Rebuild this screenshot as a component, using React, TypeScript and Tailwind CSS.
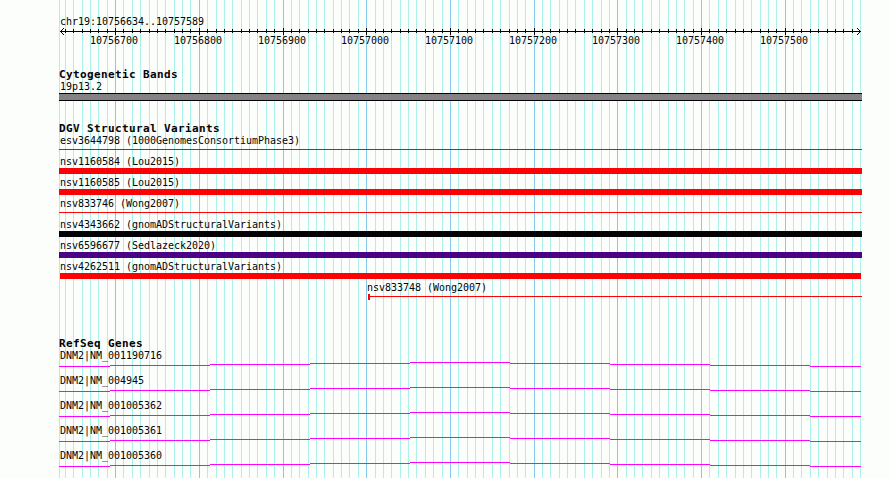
import React from 'react';

const START = 59;
const MAJOR = 83.7;
const MINOR = 8.37;
const FIRST_MAJOR = 115.62;

const rulerLabels = [
  '10756700',
  '10756800',
  '10756900',
  '10757000',
  '10757100',
  '10757200',
  '10757300',
  '10757400',
  '10757500',
];

const ticks = Array.from({ length: 96 }, (_, i) => ({
  x: Math.floor(FIRST_MAJOR + (i - 6) * MINOR),
  major: (i - 6) % 10 === 0,
}));

type Variant = { label: string; kind: 'thin' | 'bar' | 'short' | 'partial'; color: string };

const variants: Variant[] = [
  { label: 'esv3644798 (1000GenomesConsortiumPhase3)', kind: 'thin', color: 'bg-[#fc0204]' },
  { label: 'nsv1160584 (Lou2015)', kind: 'bar', color: 'bg-[#fc0204]' },
  { label: 'nsv1160585 (Lou2015)', kind: 'bar', color: 'bg-[#fc0204]' },
  { label: 'nsv833746 (Wong2007)', kind: 'thin', color: 'bg-[#fc0204]' },
  { label: 'nsv4343662 (gnomADStructuralVariants)', kind: 'bar', color: 'bg-[#040204]' },
  { label: 'nsv6596677 (Sedlazeck2020)', kind: 'bar', color: 'bg-[#4c0284]' },
  { label: 'nsv4262511 (gnomADStructuralVariants)', kind: 'short', color: 'bg-[#fc0204]' },
  { label: 'nsv833748 (Wong2007)', kind: 'partial', color: 'bg-[#fc0204]' },
];

const genes = ['DNM2|NM_001190716', 'DNM2|NM_004945', 'DNM2|NM_001005362', 'DNM2|NM_001005361', 'DNM2|NM_001005360'];

function Grid() {
  return (
    <svg className="absolute inset-0" width="890" height="478" shapeRendering="crispEdges">
      <rect x={START} y="0" width="1" height="478" fill="#acf0ec" />
      {ticks.map(({ x, major }) => (
        <rect key={x} x={x} y="0" width="1" height="478" fill={major ? '#84caec' : '#acf0ec'} />
      ))}
    </svg>
  );
}

function Ruler() {
  return (
    <svg className="block h-[22px] w-[890px] overflow-visible" viewBox="0 26 890 22">
      <g shapeRendering="crispEdges" fill="#040204">
        <rect x="60" y="31" width="801" height="1" />
        {ticks.slice(0, 89).map(({ x, major }) => (
          <rect key={x} x={x} y={major ? 28 : 29} width="1" height={major ? 7 : 4} />
        ))}
        {ticks.slice(89, 95).map(({ x }) => (
          <rect key={x} x={x} y="29" width="1" height="4" />
        ))}
        {[1, 2, 3].map((d) => (
          <React.Fragment key={d}>
            <rect x={60 + d} y={31 - d} width="1" height="1" />
            <rect x={60 + d} y={31 + d} width="1" height="1" />
            <rect x={860 - d} y={31 - d} width="1" height="1" />
            <rect x={860 - d} y={31 + d} width="1" height="1" />
          </React.Fragment>
        ))}
      </g>
      {rulerLabels.map((label, i) => (
        <text key={label} x={Math.floor(FIRST_MAJOR + i * MAJOR) - 25} y="44" fill="#040204">
          {label}
        </text>
      ))}
    </svg>
  );
}

function Heading({ children }: { children: React.ReactNode }) {
  return <h2 className="h-[12px] pl-[59px] text-[11px] leading-[14px] font-bold tracking-[0.378px]">{children}</h2>;
}

function VariantRow({ label, kind, color }: Variant) {
  if (kind === 'partial') {
    return (
      <div className="h-[21px] pl-[367px]">
        <p className="h-[13px] leading-[14px]">{label}</p>
        <div className="ml-px flex h-[6px] w-[494px]">
          <div className={`h-[6px] w-[2px] ${color}`} />
          <div className={`mt-[2px] h-px flex-1 ${color}`} />
        </div>
      </div>
    );
  }
  return (
    <div className="h-[21px] pl-[60px]">
      <p className="h-[13px] leading-[14px]">{label}</p>
      {kind === 'thin' && <div className={`mt-[2px] -ml-px h-px w-[803px] ${color}`} />}
      {kind === 'bar' && <div className={`-ml-px h-[6px] w-[803px] ${color}`} />}
      {kind === 'short' && <div className={`h-[6px] w-[801px] ${color}`} />}
    </div>
  );
}

// intron line stepping up to the middle of the view and back down
function GeneRow({ label }: { label: string }) {
  return (
    <div className="h-[25px]">
      <p className="h-[13px] pl-[60px] leading-[14px]">{label}</p>
      <svg className="block h-[5px] w-[890px]" shapeRendering="crispEdges">
        {[4, 3, 2, 1, 0, 1, 2, 3, 4].map((y, i) => {
          const x1 = i === 0 ? 59 : 10 + i * 100;
          const x2 = i === 8 ? 861 : 110 + i * 100;
          return <rect key={i} x={x1} y={y} width={x2 - x1} height="1" fill="#fc02fc" />;
        })}
      </svg>
    </div>
  );
}

export default function App() {
  return (
    <div className="relative h-[478px] w-[890px] overflow-hidden bg-[#fcfefc] font-['DejaVu_Sans_Mono','Liberation_Mono',monospace] text-[10px] tracking-[-0.02px] whitespace-pre text-[#040204]">
      <Grid />
      <main className="relative">
        <div className="h-[26px] pt-[15px] pl-[60px]">
          <p className="leading-[14px]">chr19:10756634..10757589</p>
        </div>
        <Ruler />

        <section className="pt-[20px]">
          <Heading>Cytogenetic Bands</Heading>
          <p className="h-[13px] pl-[60px] leading-[14px]">19p13.2</p>
          <div className="ml-[59px] h-[8px] w-[803px] border-y border-[#040204] bg-[#848284]" />
        </section>

        <section className="pt-[21px]">
          <Heading>DGV Structural Variants</Heading>
          {variants.map((v) => (
            <VariantRow key={v.label} {...v} />
          ))}
        </section>

        <section className="pt-[35px]">
          <Heading>RefSeq Genes</Heading>
          {genes.map((gene) => (
            <GeneRow key={gene} label={gene} />
          ))}
        </section>
      </main>
    </div>
  );
}
